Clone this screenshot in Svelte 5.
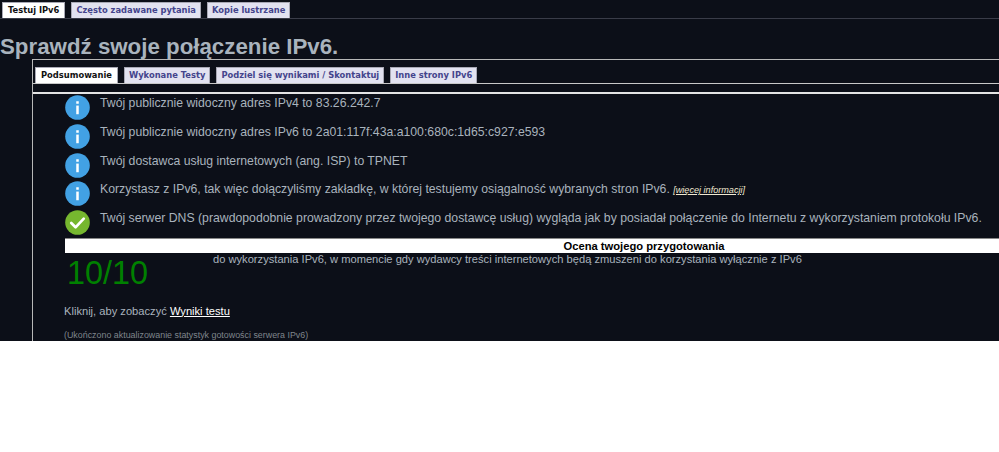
<script>
  const mainTabs = ['Testuj IPv6', 'Często zadawane pytania', 'Kopie lustrzane'];
  const subTabs = ['Podsumowanie', 'Wykonane Testy', 'Podziel się wynikami / Skontaktuj', 'Inne strony IPv6'];
  const rows = [
    { icon: 'info', text: 'Twój publicznie widoczny adres IPv4 to 83.26.242.7' },
    { icon: 'info', text: 'Twój publicznie widoczny adres IPv6 to 2a01:117f:43a:a100:680c:1d65:c927:e593' },
    { icon: 'info', text: 'Twój dostawca usług internetowych (ang. ISP) to TPNET' },
    { icon: 'info', text: 'Korzystasz z IPv6, tak więc dołączyliśmy zakładkę, w której testujemy osiągalność wybranych stron IPv6.', more: true },
    { icon: 'ok', text: 'Twój serwer DNS (prawdopodobnie prowadzony przez twojego dostawcę usług) wygląda jak by posiadał połączenie do Internetu z wykorzystaniem protokołu IPv6.' }
  ];
</script>

<div class="page">
  <ul class="tabs top">
    {#each mainTabs as tab, i}
      <li class:active={i === 0}>{tab}</li>
    {/each}
  </ul>

  <h1>Sprawdź swoje połączenie IPv6.</h1>

  <div class="panel">
    <ul class="tabs sub">
      {#each subTabs as tab, i}
        <li class:active={i === 0}>{tab}</li>
      {/each}
    </ul>

    <div class="content">
      {#each rows as row}
        <div class="row">
          <svg class="icon" viewBox="0 0 26 26" width="25" height="25">
            {#if row.icon === 'info'}
              <circle cx="13" cy="13" r="12.8" fill="#42a1e4" />
              <rect x="11.7" y="11" width="2.6" height="9" fill="#fff" />
              <rect x="11.7" y="6.5" width="2.6" height="2.6" fill="#fff" />
            {:else}
              <circle cx="13" cy="13" r="12.8" fill="#76b72f" />
              <path d="M6.5 13.5 L11 18 L19.5 9" fill="none" stroke="#fff" stroke-width="2.8" stroke-linecap="round" stroke-linejoin="round" />
            {/if}
          </svg>
          <p>{row.text}{#if row.more}&nbsp;<a class="more" href="#more">[więcej informacji]</a>{/if}</p>
        </div>
      {/each}

      <div class="score-title">Ocena twojego przygotowania</div>
      <div class="score">
        <div class="num">10/10</div>
        <div class="desc">do wykorzystania IPv6, w momencie gdy wydawcy treści internetowych będą zmuszeni do korzystania wyłącznie z IPv6</div>
      </div>

      <p class="result">Kliknij, aby zobaczyć <a href="#wyniki">Wyniki testu</a></p>
      <p class="note">(Ukończono aktualizowanie statystyk gotowości serwera IPv6)</p>
    </div>
  </div>
</div>

<style>
  :global(body) {
    margin: 0;
    background: #fff;
  }

  .page {
    height: 341px;
    background: #0c0f18;
    overflow: hidden;
    font-family: "Liberation Sans", Arial, sans-serif;
    color: #a9b3bd;
  }

  .tabs {
    display: flex;
    list-style: none;
    margin: 0;
    gap: 6px;
    font-family: "DejaVu Sans", Verdana, sans-serif;
    font-size: 8.35px;
    font-weight: bold;
    border-bottom: 1px solid #c8c8c8;
  }

  .tabs li {
    height: 15px;
    line-height: 15px;
    padding: 0 4px;
    background: #e2e2f0;
    color: #44448c;
    border: 1px solid #a9a9b5;
    border-bottom: 0;
  }

  .tabs li.active {
    padding: 0 5px;
    background: #fff;
    color: #111;
  }

  .top {
    padding: 2px 0 0 2px;
    border-bottom-color: #3a3c48;
  }

  h1 {
    margin: 16px 0 0;
    font-size: 22.3px;
    line-height: 24px;
    font-weight: bold;
    color: #a9b3bd;
  }

  .panel {
    margin: 0 0 0 32px;
    height: 300px;
    border-top: 1px solid #b8b8b8;
    border-left: 1px solid #b8b8b8;
  }

  .sub {
    padding: 7px 0 0 2px;
  }

  .content {
    margin-top: 8px;
    border-top: 2px solid #e4e4e4;
  }

  .row {
    display: flex;
    align-items: flex-start;
    gap: 9px;
    height: 28.75px;
    padding-left: 32px;
  }

  .icon {
    flex: none;
    margin-top: 1px;
    margin-right: 1px;
  }

  .row p {
    margin: 2px 0 0;
    font-size: 12.25px;
    line-height: 14px;
    white-space: nowrap;
  }

  .more {
    font-size: 9.1px;
    font-style: italic;
    color: #f0e8d0;
  }

  .score-title {
    margin: 0 0 0 32px;
    padding-left: 224px;
    height: 14px;
    line-height: 14px;
    background: #fff;
    color: #000;
    font-size: 11.2px;
    font-weight: bold;
    text-align: center;
    border-top: 1px solid #888;
  }

  .score {
    display: flex;
    padding-left: 34px;
  }

  .num {
    width: 146px;
    font-size: 32.4px;
    line-height: 40px;
    color: #008000;
  }

  .desc {
    font-size: 11.15px;
    line-height: 13px;
  }

  .result {
    margin: 11px 0 0 31px;
    font-size: 11.15px;
    line-height: 14px;
  }

  .result a {
    color: #fff;
  }

  .note {
    margin: 11px 0 0 31px;
    font-size: 8.9px;
    line-height: 12px;
    color: #7f858c;
  }
</style>
